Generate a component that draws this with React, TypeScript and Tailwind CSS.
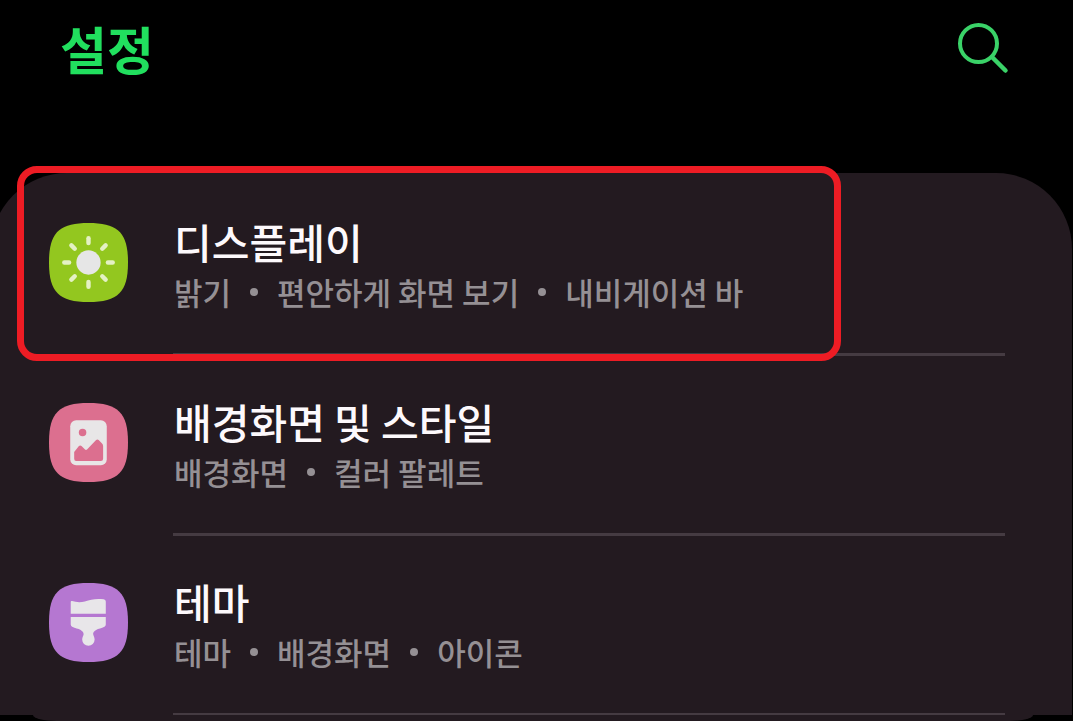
import type { ReactNode } from "react"

interface SettingItem {
  id: string
  title: string
  details: string[]
  color: string
  glyph: ReactNode
}

const SUN_RAYS = [0, 45, 90, 135, 180, 225, 270, 315]

const SETTINGS: SettingItem[] = [
  {
    id: "display",
    title: "디스플레이",
    details: ["밝기", "편안하게 화면 보기", "내비게이션 바"],
    color: "text-[#93c71f]",
    glyph: (
      <>
        <circle cx="40" cy="40" r="12.3" fill="#e6e6e6" />
        {SUN_RAYS.map((angle) => (
          <path
            key={angle}
            d="M40 15.500v4.800"
            stroke="#e4f1c4"
            strokeWidth="4.500"
            strokeLinecap="round"
            transform={`rotate(${angle} 40 40)`}
          />
        ))}
      </>
    ),
  },
  {
    id: "wallpaper",
    title: "배경화면 및 스타일",
    details: ["배경화면", "컬러 팔레트"],
    color: "text-[#dc6f8f]",
    glyph: (
      <>
        <rect x="21.500" y="17.500" width="37" height="45.500" rx="6" fill="#e8e6e7" />
        <circle cx="34" cy="29.800" r="3.800" fill="currentColor" />
        <path
          d="M25.500 49.500L30.300 43.600Q31.600 42.300 32.900 43.500L36.500 47.200Q37.500 48 38.500 47.100L47.700 37.400Q49 36.300 50.300 37.400L53.500 40.800Q54.800 42 54.800 43.500V56.500Q54.800 58.800 52.500 58.800H27.500Q25.500 58.800 25.500 56.500z"
          fill="currentColor"
        />
      </>
    ),
  },
  {
    id: "themes",
    title: "테마",
    details: ["테마", "배경화면", "아이콘"],
    color: "text-[#b577d1]",
    glyph: (
      <g fill="#e8e6e9">
        <path d="M22 19.300q0-1.300 1.300-1c4 1.300 8.500 1.700 13 .4c6-1.900 11-3.200 19-2.200q2.200.3 2.200 2.200v12.400H22z" />
        <path d="M22 34.500h35.500v7.500q0 1.600-1.300 2.300c-3.200 1.700-6 1.800-8.500 3.200q-3.300 1.800-3 4.200c.2 1.900 1.500 3.300 1.500 5.500a6.300 6.300 0 0 1-12.600 0c0-2.200 1.400-3.600 1.500-5.500q.2-2.400-3-4.200c-2.500-1.400-5.500-1.500-8.700-3.200q-1.400-.7-1.400-2.300z" />
      </g>
    ),
  },
]

function SearchIcon() {
  return (
    <svg viewBox="0 0 52 52" className="size-13" fill="none" aria-hidden="true">
      <circle cx="21.500" cy="21.500" r="18.500" stroke="#3ad268" strokeWidth="4" />
      <path d="M35 35L48.500 48.500" stroke="#3ad268" strokeWidth="4.500" strokeLinecap="round" />
    </svg>
  )
}

function SettingRow({ item, highlighted }: { item: SettingItem; highlighted: boolean }) {
  return (
    <li className="group relative">
      <a href={`#${item.id}`} className="flex pr-[67px] pl-[58px]">
        <svg viewBox="0 0 80 80" className={`mt-[47px] size-[79px] shrink-0 ${item.color}`} aria-hidden="true">
          <path
            d="M40 0C70 0 80 10 80 40S70 80 40 80 0 70 0 40 10 0 40 0z"
            fill="currentColor"
          />
          {item.glyph}
        </svg>
        <span className="ml-[45px] block h-[180px] min-w-0 flex-1 border-b-3 border-[#453b42] pt-[39px] pl-px group-last:h-[179px] group-last:border-b-2">
          <span className="block text-[41px] leading-[52px] font-medium text-[#fdf9fc]">{item.title}</span>
          <span className="flex text-[31px] leading-[50px] font-medium whitespace-nowrap text-[#959094]">
            {item.details.map((detail, index) => (
              <span key={detail} className="flex items-center">
                {index > 0 && <span className="mx-[19px] size-2 rounded-full bg-[#959094]" />}
                {detail}
              </span>
            ))}
          </span>
        </span>
      </a>
      {highlighted && (
        <div className="pointer-events-none absolute -top-[10px] right-[231px] -bottom-[5px] left-[26px] rounded-[20px] border-7 border-[#ed1c24]" />
      )}
    </li>
  )
}

export default function App() {
  return (
    <div className="min-h-screen overflow-hidden bg-black font-['Noto_Sans_CJK_KR',sans-serif]">
      <header className="flex h-[173px] items-start justify-between pt-[18px] pr-[64px] pl-[60px]">
        <h1 className="text-[51px] leading-[60px] font-bold text-[#21df5e]">설정</h1>
        <button type="button" aria-label="검색" className="mt-1">
          <SearchIcon />
        </button>
      </header>
      <main>
        <ul className="mr-px -ml-[9px] rounded-t-[76px] bg-[#231a20] pt-[3px]">
          {SETTINGS.map((item) => (
            <SettingRow key={item.id} item={item} highlighted={item.id === "display"} />
          ))}
        </ul>
        <div className="mr-10 ml-[33px] h-1.5 rounded-b-[24px_6px] bg-[#231a20]" />
      </main>
    </div>
  )
}
